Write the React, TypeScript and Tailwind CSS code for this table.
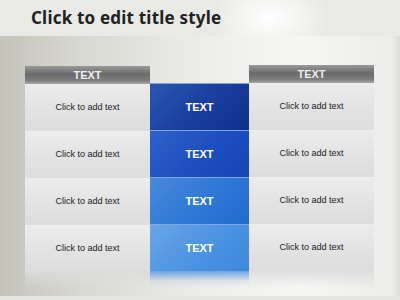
import React from "react";

const rows = ["Click to add text", "Click to add text", "Click to add text", "Click to add text"];
const blues = [
  "bg-[linear-gradient(135deg,#2a56b0_0%,#1a3f9e_50%,#0f2f8f_100%)]",
  "bg-[linear-gradient(135deg,#2f62c8_0%,#1e4fc0_50%,#1645b5_100%)]",
  "bg-[linear-gradient(135deg,#4a8ad8_0%,#3079d6_50%,#2069cf_100%)]",
  "bg-[linear-gradient(135deg,#6aa6e6_0%,#4d94e2_50%,#3c88de_100%)]",
];

function SideColumn() {
  return (
    <div className="flex w-[125px] flex-col">
      <div className="flex h-[18px] items-center justify-center bg-[linear-gradient(180deg,#9a9a9a_0%,#6a6a6a_45%,#7c7c7c_80%,#a8a8a8_100%)] text-[11px] font-bold text-[#eeeeee]" style={{ fontFamily: "'Liberation Sans', Arial, sans-serif" }}>
        TEXT
      </div>
      {rows.map((r, i) => (
        <div
          key={i}
          className="flex h-[47px] items-center justify-center border-t border-[#eeeeee] bg-[linear-gradient(180deg,#ececec_0%,#e2e2e2_60%,#dddddd_100%)] text-[9px] text-[#222]"
          style={{ fontFamily: "'Liberation Sans', Arial, sans-serif" }}
        >
          {r}
        </div>
      ))}
      <div className="h-[16px] bg-[linear-gradient(180deg,rgba(220,220,220,0.9)_0%,rgba(220,220,220,0)_100%)]" />
    </div>
  );
}

export default function App() {
  return (
    <div className="relative h-[300px] w-[400px] overflow-hidden bg-[#f4f4f2]">
      <div className="flex h-[36px] items-center bg-[radial-gradient(ellipse_60px_40px_at_270px_18px,#ffffff_0%,#f4f4f2_50%,#e9e9e6_100%)] pl-[31px]">
        <span className="text-[17px] font-bold tracking-[0.2px] text-[#222]" style={{ fontFamily: "'Noto Sans', 'Open Sans', sans-serif" }}>
          Click to edit title style
        </span>
      </div>
      <div className="flex h-[260px] items-start bg-[linear-gradient(90deg,#c4c4bb_0%,#d8d8d2_20%,#ececea_50%,#f6f6f5_75%,#ececea_98%,#dcdcd8_100%)] pl-[25px]">
        <div className="mt-[30px]">
          <SideColumn />
        </div>
        <div className="mt-[47px] flex w-[99px] flex-col">
          {blues.map((b, i) => (
            <div
              key={i}
              className={`flex h-[47px] items-center justify-center border-t border-[#7fa6e0] text-[11px] font-bold text-white ${b}`}
              style={{ fontFamily: "'Liberation Sans', Arial, sans-serif" }}
            >
              TEXT
            </div>
          ))}
          <div className="h-[16px] bg-[linear-gradient(180deg,rgba(75,145,225,0.8)_0%,rgba(190,205,225,0.4)_60%,rgba(230,230,230,0)_100%)]" />
        </div>
        <div className="mt-[29px]">
          <SideColumn />
        </div>
      </div>
      <div className="h-[4px] bg-[#e4e4e0]" />
    </div>
  );
}
